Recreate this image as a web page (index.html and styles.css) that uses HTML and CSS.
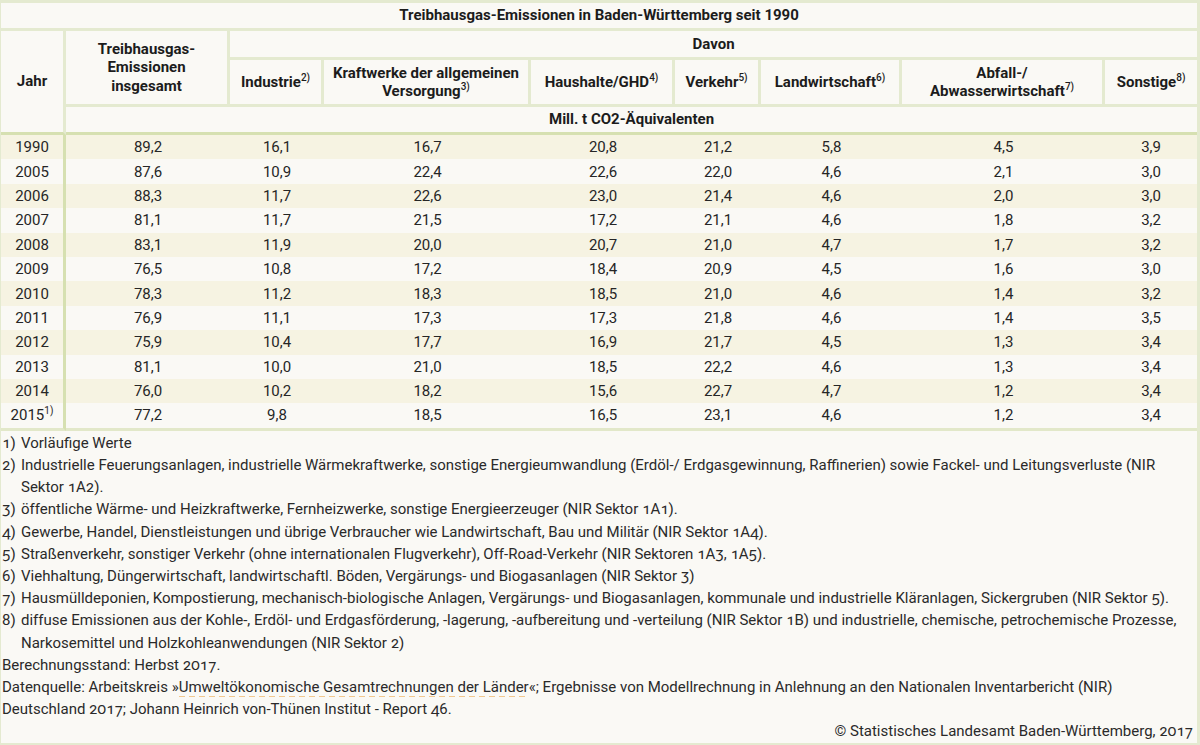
FILE: index.html
```html
<!DOCTYPE html>
<html lang="de">
<head>
<meta charset="utf-8">
<title>Treibhausgas-Emissionen in Baden-Württemberg seit 1990</title>
<link rel="stylesheet" href="styles.css">
</head>
<body>
<div class="frame">
  <table class="data">
    <colgroup>
      <col class="c-year"><col class="c-total"><col class="c-ind"><col class="c-kw"><col class="c-hh"><col class="c-vk"><col class="c-lw"><col class="c-ab"><col class="c-so">
    </colgroup>
    <thead>
      <tr class="r-title"><th colspan="9">Treibhausgas-Emissionen in Baden-Württemberg seit 1990</th></tr>
      <tr class="r-davon">
        <th rowspan="3" class="h-year">Jahr</th>
        <th rowspan="2" class="h-total">Treibhausgas-<br>Emissionen<br>insgesamt</th>
        <th colspan="7" class="h-davon">Davon</th>
      </tr>
      <tr class="r-sub">
        <th class="sep">Industrie<sup>2)</sup></th>
        <th class="sep">Kraftwerke der allgemeinen Versorgung<sup>3)</sup></th>
        <th class="sep">Haushalte/GHD<sup>4)</sup></th>
        <th class="sep">Verkehr<sup>5)</sup></th>
        <th class="sep">Landwirtschaft<sup>6)</sup></th>
        <th class="sep">Abfall-/<br>Abwasserwirtschaft<sup>7)</sup></th>
        <th>Sonstige<sup>8)</sup></th>
      </tr>
      <tr class="r-unit"><th colspan="8">Mill. t CO2-Äquivalenten</th></tr>
    </thead>
    <tbody>
      <tr><td class="y">1990</td><td>89,2</td><td>16,1</td><td>16,7</td><td>20,8</td><td>21,2</td><td>5,8</td><td>4,5</td><td>3,9</td></tr>
      <tr><td class="y">2005</td><td>87,6</td><td>10,9</td><td>22,4</td><td>22,6</td><td>22,0</td><td>4,6</td><td>2,1</td><td>3,0</td></tr>
      <tr><td class="y">2006</td><td>88,3</td><td>11,7</td><td>22,6</td><td>23,0</td><td>21,4</td><td>4,6</td><td>2,0</td><td>3,0</td></tr>
      <tr><td class="y">2007</td><td>81,1</td><td>11,7</td><td>21,5</td><td>17,2</td><td>21,1</td><td>4,6</td><td>1,8</td><td>3,2</td></tr>
      <tr><td class="y">2008</td><td>83,1</td><td>11,9</td><td>20,0</td><td>20,7</td><td>21,0</td><td>4,7</td><td>1,7</td><td>3,2</td></tr>
      <tr><td class="y">2009</td><td>76,5</td><td>10,8</td><td>17,2</td><td>18,4</td><td>20,9</td><td>4,5</td><td>1,6</td><td>3,0</td></tr>
      <tr><td class="y">2010</td><td>78,3</td><td>11,2</td><td>18,3</td><td>18,5</td><td>21,0</td><td>4,6</td><td>1,4</td><td>3,2</td></tr>
      <tr><td class="y">2011</td><td>76,9</td><td>11,1</td><td>17,3</td><td>17,3</td><td>21,8</td><td>4,6</td><td>1,4</td><td>3,5</td></tr>
      <tr><td class="y">2012</td><td>75,9</td><td>10,4</td><td>17,7</td><td>16,9</td><td>21,7</td><td>4,5</td><td>1,3</td><td>3,4</td></tr>
      <tr><td class="y">2013</td><td>81,1</td><td>10,0</td><td>21,0</td><td>18,5</td><td>22,2</td><td>4,6</td><td>1,3</td><td>3,4</td></tr>
      <tr><td class="y">2014</td><td>76,0</td><td>10,2</td><td>18,2</td><td>15,6</td><td>22,7</td><td>4,7</td><td>1,2</td><td>3,4</td></tr>
      <tr class="last"><td class="y">2015<sup>1)</sup></td><td>77,2</td><td>9,8</td><td>18,5</td><td>16,5</td><td>23,1</td><td>4,6</td><td>1,2</td><td>3,4</td></tr>
    </tbody>
  </table>
  <div class="notes">
    <div class="fn"><span class="n">1)</span><span class="t">Vorläufige Werte</span></div>
    <div class="fn"><span class="n">2)</span><span class="t">Industrielle Feuerungsanlagen, industrielle Wärmekraftwerke, sonstige Energieumwandlung (Erdöl-/ Erdgasgewinnung, Raffinerien) sowie Fackel- und Leitungsverluste (NIR Sektor 1A2).</span></div>
    <div class="fn"><span class="n">3)</span><span class="t">öffentliche Wärme- und Heizkraftwerke, Fernheizwerke, sonstige Energieerzeuger (NIR Sektor 1A1).</span></div>
    <div class="fn"><span class="n">4)</span><span class="t">Gewerbe, Handel, Dienstleistungen und übrige Verbraucher wie Landwirtschaft, Bau und Militär (NIR Sektor 1A4).</span></div>
    <div class="fn"><span class="n">5)</span><span class="t">Straßenverkehr, sonstiger Verkehr (ohne internationalen Flugverkehr), Off-Road-Verkehr (NIR Sektoren 1A3, 1A5).</span></div>
    <div class="fn"><span class="n">6)</span><span class="t">Viehhaltung, Düngerwirtschaft, landwirtschaftl. Böden, Vergärungs- und Biogasanlagen (NIR Sektor 3)</span></div>
    <div class="fn"><span class="n">7)</span><span class="t">Hausmülldeponien, Kompostierung, mechanisch-biologische Anlagen, Vergärungs- und Biogasanlagen, kommunale und industrielle Kläranlagen, Sickergruben (NIR Sektor 5).</span></div>
    <div class="fn"><span class="n">8)</span><span class="t">diffuse Emissionen aus der Kohle-, Erdöl- und Erdgasförderung, -lagerung, -aufbereitung und -verteilung (NIR Sektor 1B) und industrielle, chemische, petrochemische Prozesse, Narkosemittel und Holzkohleanwendungen (NIR Sektor 2)</span></div>
    <p class="line">Berechnungsstand: Herbst 2017.</p>
    <p class="line">Datenquelle: Arbeitskreis »<abbr class="dash" title="UGRdL">Umweltökonomische Gesamtrechnungen der Länder</abbr>«; Ergebnisse von Modellrechnung in Anlehnung an den Nationalen Inventarbericht (NIR) Deutschland 2017; Johann Heinrich von-Thünen Institut - Report 46.</p>
    <p class="copy">© Statistisches Landesamt Baden-Württemberg, 2017</p>
  </div>
</div>
</body>
</html>
```

FILE: styles.css
```css
html, body {
  margin: 0;
  padding: 0;
  background: #faf9f5;
}

body {
  font-family: Roboto, "Liberation Sans", Arial, sans-serif;
  color: #222;
  width: 1200px;
}

.frame {
  box-sizing: border-box;
  width: 1200px;
  border: 3px solid #e4ead0;
  border-left-width: 1px;
  background: #faf9f5;
}

.data {
  width: 100%;
  table-layout: fixed;
  border-collapse: separate;
  border-spacing: 0;
  font-size: 15px;
}

.c-year { width: 65px; }
.c-total { width: 164px; }
.c-ind { width: 94px; }
.c-kw { width: 207px; }
.c-hh { width: 144px; }
.c-vk { width: 86px; }
.c-lw { width: 141px; }
.c-ab { width: 203px; }
.c-so { width: 92px; }

.data th {
  box-sizing: border-box;
  padding: 0 2px;
  font-weight: 700;
  font-size: 15px;
  line-height: 18.5px;
  color: #1c1c1c;
  text-align: center;
  vertical-align: middle;
  background: #faf9f5;
}

.r-title th {
  height: 28px;
  border-bottom: 3px solid #e4ead0;
}

.r-davon .h-davon {
  height: 29px;
  border-bottom: 3px solid #e4ead0;
}

.h-year {
  border-right: 3px solid #e4ead0;
  border-bottom: 3px solid #d6e0b1;
}

.h-total {
  border-right: 3px solid #e4ead0;
  border-bottom: 3px solid #e4ead0;
}

.r-sub th {
  height: 47px;
  border-bottom: 3px solid #e4ead0;
}

.r-sub th.sep {
  border-right: 3px solid #e4ead0;
}

.r-unit th {
  height: 28px;
  border-bottom: 3px solid #d6e0b1;
}

.data sup {
  font-size: 10px;
  line-height: 1;
  vertical-align: 6px;
  font-weight: 500;
}

.data td {
  box-sizing: border-box;
  height: 24.4px;
  padding: 0 2px;
  line-height: 18px;
  text-align: center;
  vertical-align: middle;
  color: #262626;
}

.data td sup {
  font-weight: 400;
}

.data tbody tr:nth-child(odd) td {
  background: #f6f3e2;
}

.data tbody tr:nth-child(even) td {
  background: #faf9f5;
}

.data td.y {
  border-right: 3px solid #d6e0b1;
}

.data tr.last td {
  height: 27.4px;
  border-bottom: 3px solid #e2e8c9;
}

.notes {
  padding: 1px 2px 0 1px;
  font-size: 15px;
  line-height: 22.2px;
  color: #2a2a2a;
  font-variant-numeric: oldstyle-nums;
}

.fn {
  display: flex;
}

.fn .n {
  flex: 0 0 19px;
}

.fn .t {
  flex: 1 1 auto;
}

.line,
.copy {
  margin: 0;
}

.copy {
  text-align: right;
  padding-right: 2px;
}

.dash {
  text-decoration: none;
  background-image: repeating-linear-gradient(to right, #f2c88e 0, #f2c88e 6px, transparent 6px, transparent 10px);
  background-repeat: no-repeat;
  background-size: 100% 1px;
  background-position: 0 100%;
  padding-bottom: 1px;
}
```
